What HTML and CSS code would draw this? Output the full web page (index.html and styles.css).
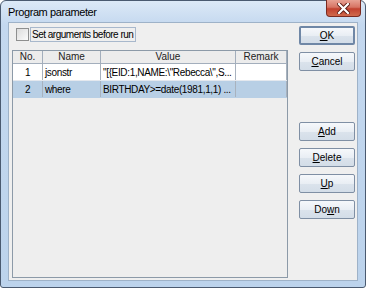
FILE: index.html
```html
<!DOCTYPE html>
<html lang="en">
<head>
    <meta charset="UTF-8">
    <title>Program parameter</title>
    <link rel="stylesheet" href="styles.css">
</head>
<body>

    <div class="window">
        <div class="titlebar">
            <span class="title">Program parameter</span>
            <span class="close">
                <svg width="13" height="11" viewBox="0 0 13 11">
                    <path d="M2 1 L11 10 M11 1 L2 10" stroke="#5a1a12" stroke-width="4" stroke-linecap="square"/>
                    <path d="M2 1 L11 10 M11 1 L2 10" stroke="#fff" stroke-width="2.2" stroke-linecap="square"/>
                </svg>
            </span>
        </div>

        <div class="client">
            <div class="main">
                <label class="check-row">
                    <span class="box"></span>
                    <span class="check-label">Set arguments before run</span>
                </label>

                <div class="scroll">
                    <table class="grid">
                        <thead>
                            <tr>
                                <th class="c-no">No.</th>
                                <th class="c-name">Name</th>
                                <th class="c-value">Value</th>
                                <th class="c-remark">Remark</th>
                            </tr>
                        </thead>
                        <tbody>
                            <tr>
                                <td class="num">1</td>
                                <td>jsonstr</td>
                                <td>"[{EID:1,NAME:\"Rebecca\",S...</td>
                                <td></td>
                            </tr>
                            <tr class="selected">
                                <td class="num">2</td>
                                <td>where</td>
                                <td>BIRTHDAY&gt;=date(1981,1,1) ...</td>
                                <td></td>
                            </tr>
                        </tbody>
                    </table>
                </div>
            </div>

            <div class="side">
                <button class="btn default"><u>O</u>K</button>
                <button class="btn"><u>C</u>ancel</button>
                <div class="spacer"></div>
                <button class="btn"><u>A</u>dd</button>
                <button class="btn"><u>D</u>elete</button>
                <button class="btn"><u>U</u>p</button>
                <button class="btn">Do<u>w</u>n</button>
            </div>
        </div>
    </div>

</body>
</html>
```

FILE: styles.css
```css
body {
    margin: 0;
    background: #ffffff;
    font-family: 'Liberation Sans', Arial, sans-serif;
}

.window {
    width: 366px;
    height: 288px;
    box-sizing: border-box;
    border: 1px solid #4a5a70;
    border-radius: 6px 6px 3px 3px;
    background: linear-gradient(180deg, #dce9f7 0px, #c4d8ef 24px, #bcd3ec 100%);
    padding: 0 7px 6px 7px;
    display: flex;
    flex-direction: column;
}

.titlebar {
    height: 21px;
    position: relative;
    display: flex;
    align-items: center;
}

.title {
    font-family: 'Liberation Sans', Arial, sans-serif;
    font-size: 11px;
    letter-spacing: -0.4px;
    color: #000;
    margin-top: 1px;
}

.close {
    position: absolute;
    top: -1px;
    right: -3px;
    width: 35px;
    height: 17px;
    box-sizing: border-box;
    border: 1px solid #7a2a20;
    border-top: none;
    border-radius: 0 0 4px 4px;
    background: linear-gradient(180deg, #e8a294 0%, #d77464 45%, #c2412f 55%, #d06a4c 100%);
    display: flex;
    align-items: center;
    justify-content: center;
}

.client {
    flex: 1;
    background: #efefef;
    border: 1px solid #9eb2c8;
    display: flex;
    padding: 3px 3px 2px 3px;
}

.main {
    width: 276px;
    display: flex;
    flex-direction: column;
}

.check-row {
    display: flex;
    align-items: center;
    margin: 0 0 8px 4px;
    height: 16px;
}

.box {
    width: 11px;
    height: 11px;
    border: 1px solid #8e8f8f;
    background: linear-gradient(135deg, #dcdcdc, #fbfbfb);
    margin-right: 1px;
}

.check-label {
    font-size: 10px;
    letter-spacing: -0.5px;
    color: #000;
    border: 1px solid #a8b8cc;
    padding: 0 2px 0 1px;
    line-height: 13px;
}

.scroll {
    flex: 1;
    border: 1px solid #8c9aa8;
    background: #eeeeee;
}

.grid {
    border-collapse: collapse;
    table-layout: fixed;
    width: 274px;
    font-size: 10px;
}

.grid th {
    height: 12px;
    padding: 0;
    font-weight: normal;
    color: #222;
    background: #ececec;
    border-right: 1px solid #a3aebc;
    border-bottom: 1px solid #a3aebc;
    line-height: 12px;
    text-align: center;
}

.c-no { width: 29px; }
.c-name { width: 57px; }
.c-value { width: 134px; }

.grid td {
    height: 16px;
    padding: 0 0 0 2px;
    background: #ffffff;
    border-right: 1px solid #a8b2be;
    border-bottom: 1px solid #e4e8ee;
    white-space: nowrap;
    overflow: hidden;
    letter-spacing: -0.35px;
    color: #000;
}

.grid td.num {
    text-align: center;
    padding: 0;
}

.grid tr.selected td {
    background: #b8cfe5;
    border-bottom-color: #b8cfe5;
}

.side {
    margin-left: 11px;
    display: flex;
    flex-direction: column;
    gap: 7px;
}

.spacer {
    height: 37px;
}

.btn {
    width: 56px;
    height: 19px;
    padding: 0;
    font-family: 'Liberation Sans', Arial, sans-serif;
    font-size: 10px;
    color: #000;
    border: 1px solid #7f8fa4;
    border-radius: 2px;
    background: linear-gradient(180deg, #f6f8fb 0%, #e9eef4 50%, #dbe3ec 51%, #d3dde8 100%);
}

.btn.default {
    border: 2px solid #6f87a6;
}
```
